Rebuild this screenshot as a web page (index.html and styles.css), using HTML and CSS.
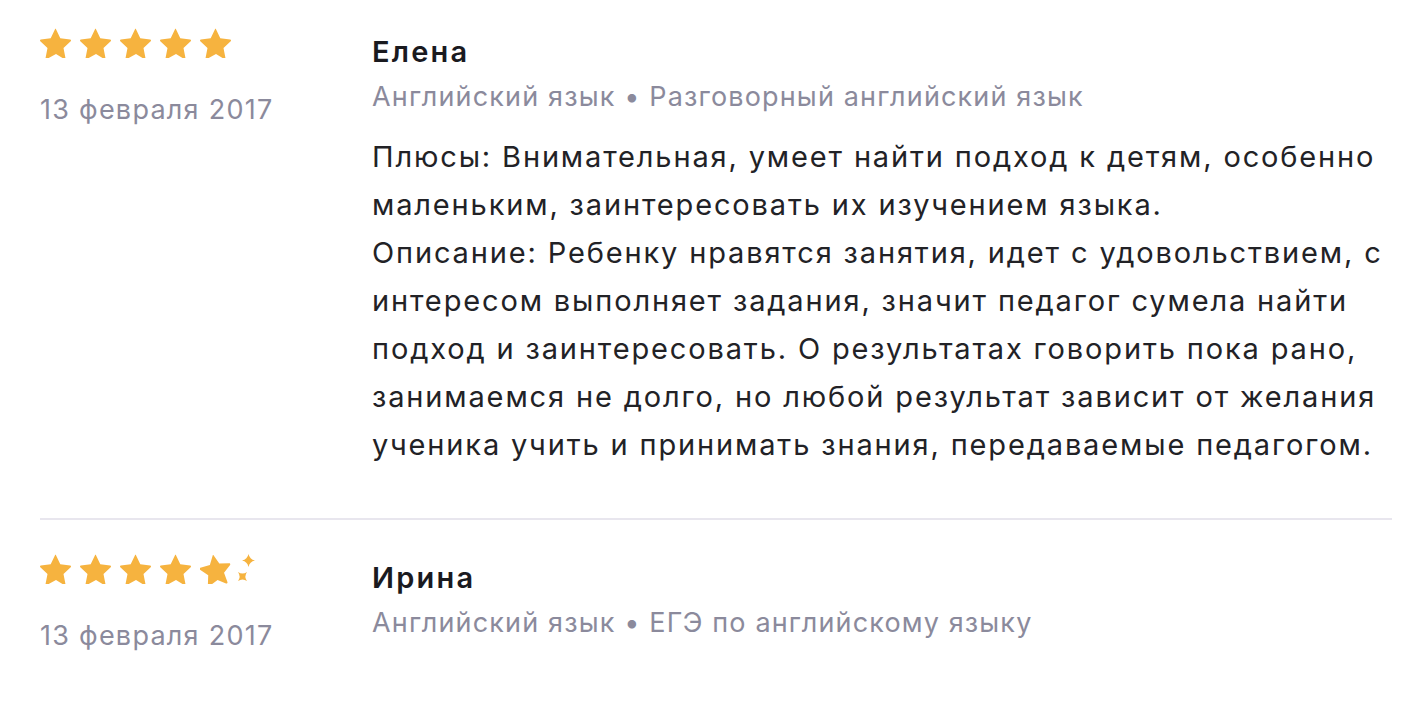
FILE: index.html
```html
<!DOCTYPE html>
<html lang="ru">
<head>
<meta charset="utf-8">
<link rel="stylesheet" href="styles.css">
</head>
<body>
<div class="reviews">
  <div class="review">
    <div class="side">
      <div class="stars">
        <svg class="star" viewBox="0 0 32 30"><path d="M16 1.2l4.3 9 9.8 1.2c.9.1 1.2 1.2.6 1.8l-7.2 6.8 1.9 9.7c.2.9-.8 1.6-1.6 1.1L16 26 7.2 30.8c-.8.5-1.8-.2-1.6-1.1l1.9-9.7L.3 13.2c-.6-.6-.3-1.7.6-1.8l9.8-1.2 4.3-9c.2-.5.8-.5 1 0z"/></svg>
        <svg class="star" viewBox="0 0 32 30"><path d="M16 1.2l4.3 9 9.8 1.2c.9.1 1.2 1.2.6 1.8l-7.2 6.8 1.9 9.7c.2.9-.8 1.6-1.6 1.1L16 26 7.2 30.8c-.8.5-1.8-.2-1.6-1.1l1.9-9.7L.3 13.2c-.6-.6-.3-1.7.6-1.8l9.8-1.2 4.3-9c.2-.5.8-.5 1 0z"/></svg>
        <svg class="star" viewBox="0 0 32 30"><path d="M16 1.2l4.3 9 9.8 1.2c.9.1 1.2 1.2.6 1.8l-7.2 6.8 1.9 9.7c.2.9-.8 1.6-1.6 1.1L16 26 7.2 30.8c-.8.5-1.8-.2-1.6-1.1l1.9-9.7L.3 13.2c-.6-.6-.3-1.7.6-1.8l9.8-1.2 4.3-9c.2-.5.8-.5 1 0z"/></svg>
        <svg class="star" viewBox="0 0 32 30"><path d="M16 1.2l4.3 9 9.8 1.2c.9.1 1.2 1.2.6 1.8l-7.2 6.8 1.9 9.7c.2.9-.8 1.6-1.6 1.1L16 26 7.2 30.8c-.8.5-1.8-.2-1.6-1.1l1.9-9.7L.3 13.2c-.6-.6-.3-1.7.6-1.8l9.8-1.2 4.3-9c.2-.5.8-.5 1 0z"/></svg>
        <svg class="star" viewBox="0 0 32 30"><path d="M16 1.2l4.3 9 9.8 1.2c.9.1 1.2 1.2.6 1.8l-7.2 6.8 1.9 9.7c.2.9-.8 1.6-1.6 1.1L16 26 7.2 30.8c-.8.5-1.8-.2-1.6-1.1l1.9-9.7L.3 13.2c-.6-.6-.3-1.7.6-1.8l9.8-1.2 4.3-9c.2-.5.8-.5 1 0z"/></svg>
      </div>
      <div class="date">13 февраля 2017</div>
    </div>
    <div class="main">
      <div class="name">Елена</div>
      <div class="meta">Английский язык • Разговорный английский язык</div>
      <div class="text">Плюсы: Внимательная, умеет найти подход к детям, особенно маленьким, заинтересовать их изучением языка.<br>Описание: Ребенку нравятся занятия, идет с удовольствием, с интересом выполняет задания, значит педагог сумела найти подход и заинтересовать. О результатах говорить пока рано, занимаемся не долго, но любой результат зависит от желания ученика учить и принимать знания, передаваемые педагогом.</div>
    </div>
  </div>
  <div class="review">
    <div class="side">
      <div class="stars">
        <svg class="star" viewBox="0 0 32 30"><path d="M16 1.2l4.3 9 9.8 1.2c.9.1 1.2 1.2.6 1.8l-7.2 6.8 1.9 9.7c.2.9-.8 1.6-1.6 1.1L16 26 7.2 30.8c-.8.5-1.8-.2-1.6-1.1l1.9-9.7L.3 13.2c-.6-.6-.3-1.7.6-1.8l9.8-1.2 4.3-9c.2-.5.8-.5 1 0z"/></svg>
        <svg class="star" viewBox="0 0 32 30"><path d="M16 1.2l4.3 9 9.8 1.2c.9.1 1.2 1.2.6 1.8l-7.2 6.8 1.9 9.7c.2.9-.8 1.6-1.6 1.1L16 26 7.2 30.8c-.8.5-1.8-.2-1.6-1.1l1.9-9.7L.3 13.2c-.6-.6-.3-1.7.6-1.8l9.8-1.2 4.3-9c.2-.5.8-.5 1 0z"/></svg>
        <svg class="star" viewBox="0 0 32 30"><path d="M16 1.2l4.3 9 9.8 1.2c.9.1 1.2 1.2.6 1.8l-7.2 6.8 1.9 9.7c.2.9-.8 1.6-1.6 1.1L16 26 7.2 30.8c-.8.5-1.8-.2-1.6-1.1l1.9-9.7L.3 13.2c-.6-.6-.3-1.7.6-1.8l9.8-1.2 4.3-9c.2-.5.8-.5 1 0z"/></svg>
        <svg class="star" viewBox="0 0 32 30"><path d="M16 1.2l4.3 9 9.8 1.2c.9.1 1.2 1.2.6 1.8l-7.2 6.8 1.9 9.7c.2.9-.8 1.6-1.6 1.1L16 26 7.2 30.8c-.8.5-1.8-.2-1.6-1.1l1.9-9.7L.3 13.2c-.6-.6-.3-1.7.6-1.8l9.8-1.2 4.3-9c.2-.5.8-.5 1 0z"/></svg>
        <svg class="star star-half" viewBox="0 0 56 30"><path transform="rotate(-9 16 16)" d="M16 1.2l4.3 9 9.8 1.2c.9.1 1.2 1.2.6 1.8l-7.2 6.8 1.9 9.7c.2.9-.8 1.6-1.6 1.1L16 26 7.2 30.8c-.8.5-1.8-.2-1.6-1.1l1.9-9.7L.3 13.2c-.6-.6-.3-1.7.6-1.8l9.8-1.2 4.3-9c.2-.5.8-.5 1 0z"/><path d="M48.5 0Q49.6 5.4 55 6.5Q49.6 7.6 48.5 13Q47.4 7.6 42 6.5Q47.4 5.4 48.5 0z"/><path d="M38 18Q42.5 21.2 47 18Q43.8 22.5 47 27Q42.5 23.8 38 27Q41.2 22.5 38 18z"/></svg>
      </div>
      <div class="date">13 февраля 2017</div>
    </div>
    <div class="main">
      <div class="name">Ирина</div>
      <div class="meta">Английский язык • ЕГЭ по английскому языку</div>
    </div>
  </div>
</div>
</body>
</html>
```

FILE: styles.css
```css
* { box-sizing: border-box; }
html, body { margin: 0; padding: 0; background: #fff; }
body {
  font-family: Inter, "Noto Sans", "Liberation Sans", sans-serif;
  color: #222226;
  -webkit-font-smoothing: antialiased;
}
.reviews {
  padding: 28px 31px 0 40px;
}
.review {
  display: flex;
  padding-bottom: 49px;
  border-bottom: 2px solid #e8e6ee;
}
.review + .review {
  padding-top: 34px;
  border-bottom: none;
}
.side {
  width: 332px;
  flex: none;
}
.stars {
  display: flex;
  gap: 8px;
  height: 30px;
}
.star {
  width: 32px;
  height: 30px;
  fill: #f6b33f;
}
.star-half {
  width: 56px;
}
.date {
  margin-top: 34px;
  font-size: 27px;
  line-height: 36px;
  letter-spacing: 1.25px;
  color: #8b8a9c;
}
.main {
  flex: 1;
  min-width: 0;
}
.name {
  margin-top: 6px;
  font-size: 29px;
  line-height: 36px;
  font-weight: 600;
  letter-spacing: 2.2px;
  color: #1a1a1f;
}
.meta {
  margin-top: 9px;
  font-size: 27px;
  line-height: 36px;
  letter-spacing: 1.15px;
  color: #8b8a9c;
}
.text {
  margin-top: 18px;
  margin-right: -20px;
  font-size: 29px;
  line-height: 48px;
  letter-spacing: 1.85px;
  color: #222226;
}
```
